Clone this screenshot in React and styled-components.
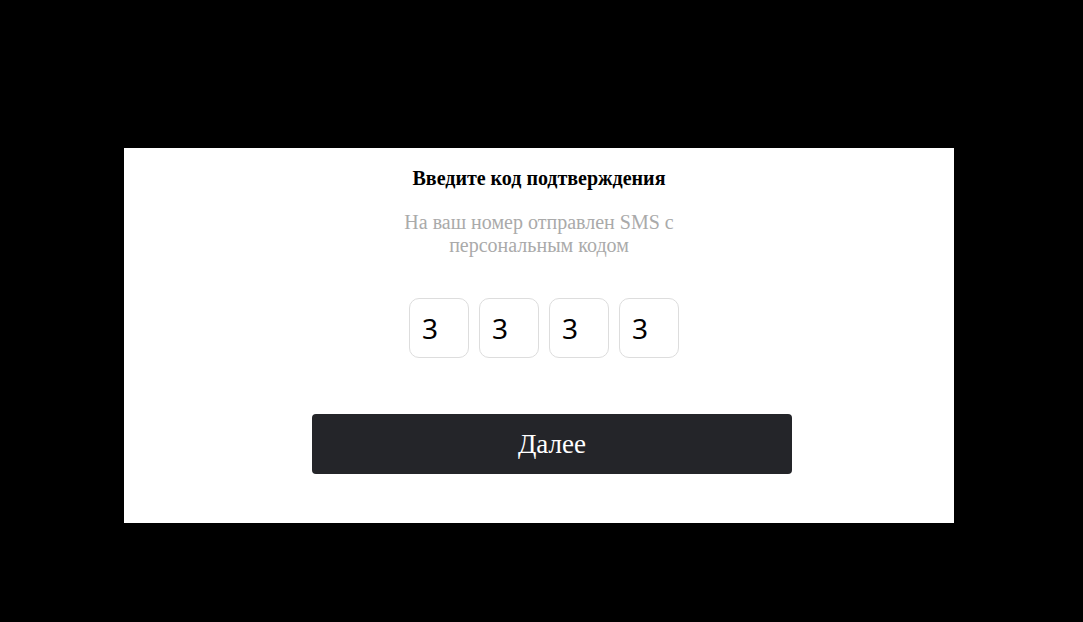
import React from 'react';
import styled, { createGlobalStyle } from 'styled-components';

const GlobalStyle = createGlobalStyle`
    html, body {
        margin: 0;
        padding: 0;
        background: #000;
    }
    * {
        box-sizing: border-box;
    }
`;

const Overlay = styled.div`
    width: 100%;
    min-height: 100vh;
    display: flex;
    justify-content: center;
    align-items: flex-start;
    padding: 148px 5px 0 0;
    background: #000;
`;

const Modal = styled.div`
    width: 830px;
    background: #fff;
    padding: 20px 0 49px;
    display: flex;
    flex-direction: column;
    align-items: center;
    font-family: "Liberation Serif", "Times New Roman", serif;
`;

const Title = styled.h3`
    margin: 0;
    font-size: 20px;
    font-weight: 700;
    color: #000;
    line-height: 20px;
`;

const Subtitle = styled.p`
    margin: 23px 0 0;
    max-width: 290px;
    text-align: center;
    font-size: 20px;
    line-height: 23px;
    color: #aaa;
`;

const CodeRow = styled.div`
    display: flex;
    gap: 10px;
    margin: 41px 0 0 10px;
`;

const CodeInput = styled.input`
    width: 60px;
    height: 60px;
    border: 1px solid #ddd;
    border-radius: 10px;
    padding: 0 0 0 12px;
    font-family: "Noto Sans", "Open Sans", sans-serif;
    font-size: 28px;
    font-weight: 400;
    color: #000;
    background: #fff;
    outline: none;
`;

const NextButton = styled.button`
    margin: 56px 0 0 26px;
    width: 480px;
    height: 60px;
    border: none;
    border-radius: 4px;
    background: #242529;
    color: #fff;
    font-family: "Liberation Serif", "Times New Roman", serif;
    font-size: 27px;
    cursor: pointer;
`;

const App = () => {
    const code = ['3', '3', '3', '3'];

    return (
        <>
            <GlobalStyle />
            <Overlay>
                <Modal>
                    <Title>Введите код подтверждения</Title>
                    <Subtitle>На ваш номер отправлен SMS с персональным кодом</Subtitle>
                    <CodeRow>
                        {code.map((digit, i) => (
                            <CodeInput key={i} defaultValue={digit} maxLength={1} />
                        ))}
                    </CodeRow>
                    <NextButton>Далее</NextButton>
                </Modal>
            </Overlay>
        </>
    );
};

export default App;
